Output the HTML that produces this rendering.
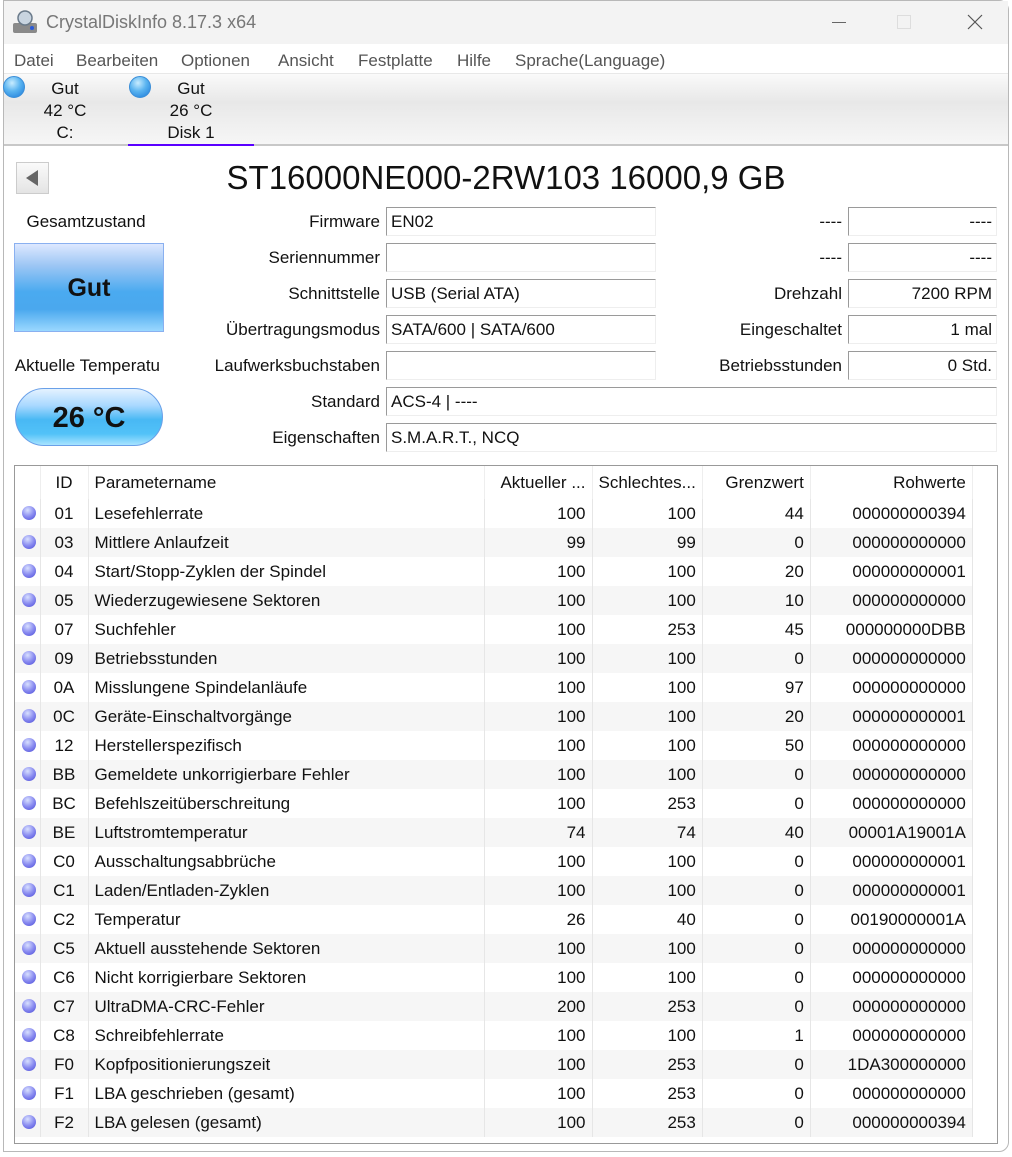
<!DOCTYPE html>
<html><head><meta charset="utf-8"><style>
*{margin:0;padding:0;box-sizing:border-box}
body{width:1012px;height:1157px;background:#fff;font-family:"Liberation Sans",sans-serif;font-size:17px;color:#111;position:relative;overflow:hidden}
.a{position:absolute;white-space:nowrap}
.win{position:absolute;left:3px;top:0;width:1006px;height:1152px;border:1px solid #b8b8b8;border-radius:0 10px 10px 0;background:#fff}
.title{left:4px;top:1px;width:1004px;height:43px;background:#f3f3f3}
.m{position:absolute;top:51px;color:#555}
.box{position:absolute;height:29px;border-top:1px solid #9a9a9a;border-left:1px solid #9a9a9a;border-bottom:1px solid #eee;border-right:1px solid #eee;padding:0 4px;line-height:27px}
.lbl{position:absolute;text-align:right;line-height:29px}
.ball{position:absolute;width:22px;height:22px;border-radius:50%;background:radial-gradient(circle at 40% 30%,#c8ecff 0,#5ab4f0 45%,#1a78d8 100%);border:1px solid #3a8ed8}
.dot{position:absolute;left:7px;width:14px;height:14px;border-radius:50%;background:radial-gradient(circle at 40% 30%,#d8e0ff 0,#8a8cf0 50%,#4a4ad8 100%);top:7px}
table{border-collapse:collapse;position:absolute;left:15px;top:466px;font-size:17px}
td{height:29px;padding:0 6px;border-right:1px solid #e6e6e6;white-space:nowrap}
tr.h td{height:33px;border-right:1px solid #eee}
tr:nth-child(odd):not(.h) td{background:#f6f6f6}
td.r{text-align:right}
</style></head><body>
<div class="win"></div>
<div class="a title"></div>
<svg class="a" style="left:12px;top:9px" width="26" height="26" viewBox="0 0 26 26"><rect x="1" y="14" width="24" height="10" rx="2" fill="#8a8a8a"/><circle cx="13" cy="9" r="7" fill="#c8d4e0" stroke="#6a7a8a" stroke-width="1.5"/><circle cx="20" cy="19" r="2" fill="#2a5ad8"/></svg>
<div class="a" style="left:46px;top:12px;font-size:18px;color:#777">CrystalDiskInfo 8.17.3 x64</div>
<div class="a" style="left:832px;top:22px;width:14px;height:1px;background:#666"></div>
<div class="a" style="left:897px;top:15px;width:14px;height:14px;border:1px solid #ddd"></div>
<svg class="a" style="left:967px;top:14px" width="16" height="16"><path d="M1 1L15 15M15 1L1 15" stroke="#555" stroke-width="1.2"/></svg>
<span class="m" style="left:14px">Datei</span><span class="m" style="left:76px">Bearbeiten</span><span class="m" style="left:181px">Optionen</span><span class="m" style="left:278px">Ansicht</span><span class="m" style="left:358px">Festplatte</span><span class="m" style="left:457px">Hilfe</span><span class="m" style="left:515px">Sprache(Language)</span>
<div class="a" style="left:4px;top:73px;width:1004px;height:73px;background:linear-gradient(#fafafa 0,#e8e8e8 40%,#f6f6f6 100%);border-top:1px solid #e8e8e8;border-bottom:2px solid #c8c8c8"></div>
<div class="ball" style="left:3px;top:76px"></div>
<div class="a" style="left:30px;top:78px;width:70px;text-align:center;line-height:22px">Gut<br>42 °C<br>C:</div>
<div class="ball" style="left:129px;top:76px"></div>
<div class="a" style="left:150px;top:78px;width:82px;text-align:center;line-height:22px">Gut<br>26 °C<br>Disk 1</div>
<div class="a" style="left:128px;top:144px;width:126px;height:2px;background:#5a00ff"></div>

<div class="a" style="left:16px;top:162px;width:33px;height:32px;border:1px solid #ccc;background:linear-gradient(#fafafa,#e4e4e4)"></div>
<svg class="a" style="left:22px;top:168px" width="20" height="20"><path d="M16 2L4 10L16 18Z" fill="#666"/></svg>
<div class="a" style="left:0;top:159px;width:1012px;text-align:center;font-size:33px;padding-left:0">ST16000NE000-2RW103 16000,9 GB</div>

<div class="a" style="left:14px;top:212px;width:144px;text-align:center">Gesamtzustand</div>
<div class="a" style="left:14px;top:243px;width:150px;height:89px;border:1px solid #8ab0f0;background:linear-gradient(#dde8ff 0,#9cc6f4 25%,#4aaaf0 55%,#4aa8ee 75%,#9ad8ff 100%);text-align:center;line-height:89px;font-weight:bold;font-size:25px">Gut</div>
<div class="a" style="left:0;top:356px;width:160px;text-align:right;overflow:hidden;direction:rtl"><span style="direction:ltr">Aktuelle Temperatu</span></div>
<div class="a" style="left:15px;top:388px;width:148px;height:58px;border:1px solid #6aa0e8;border-radius:29px;background:linear-gradient(#e4f2ff 0,#a8d8ff 30%,#48b8f4 55%,#52c2f8 80%,#a8e4ff 100%);text-align:center;line-height:58px;font-weight:bold;font-size:29px">26 °C</div>

<div class="lbl" style="left:180px;width:200px;top:207px">Firmware</div>
<div class="lbl" style="left:180px;width:200px;top:243px">Seriennummer</div>
<div class="lbl" style="left:180px;width:200px;top:279px">Schnittstelle</div>
<div class="lbl" style="left:180px;width:200px;top:315px">Übertragungsmodus</div>
<div class="lbl" style="left:180px;width:200px;top:351px">Laufwerksbuchstaben</div>
<div class="lbl" style="left:180px;width:200px;top:387px">Standard</div>
<div class="lbl" style="left:180px;width:200px;top:423px">Eigenschaften</div>
<div class="box" style="left:386px;width:270px;top:207px">EN02</div>
<div class="box" style="left:386px;width:270px;top:243px"></div>
<div class="box" style="left:386px;width:270px;top:279px">USB (Serial ATA)</div>
<div class="box" style="left:386px;width:270px;top:315px">SATA/600 | SATA/600</div>
<div class="box" style="left:386px;width:270px;top:351px"></div>
<div class="box" style="left:386px;width:611px;top:387px">ACS-4 | ----</div>
<div class="box" style="left:386px;width:611px;top:423px">S.M.A.R.T., NCQ</div>
<div class="lbl" style="left:660px;width:182px;top:207px">----</div>
<div class="lbl" style="left:660px;width:182px;top:243px">----</div>
<div class="lbl" style="left:660px;width:182px;top:279px">Drehzahl</div>
<div class="lbl" style="left:660px;width:182px;top:315px">Eingeschaltet</div>
<div class="lbl" style="left:660px;width:182px;top:351px">Betriebsstunden</div>
<div class="box" style="left:848px;width:149px;top:207px;text-align:right">----</div>
<div class="box" style="left:848px;width:149px;top:243px;text-align:right">----</div>
<div class="box" style="left:848px;width:149px;top:279px;text-align:right">7200 RPM</div>
<div class="box" style="left:848px;width:149px;top:315px;text-align:right">1 mal</div>
<div class="box" style="left:848px;width:149px;top:351px;text-align:right">0 Std.</div>

<div class="a" style="left:14px;top:465px;width:984px;height:679px;border:1px solid #999"></div>
<table>
<colgroup><col style="width:25px"><col style="width:48px"><col style="width:396px"><col style="width:108px"><col style="width:108px"><col style="width:108px"><col style="width:162px"></colgroup>
<tr class="h"><td></td><td style="text-align:center">ID</td><td>Parametername</td><td class="r">Aktueller ...</td><td class="r">Schlechtes...</td><td class="r">Grenzwert</td><td class="r">Rohwerte</td></tr>
<tr><td style="position:relative"><div class="dot"></div></td><td style="text-align:center">01</td><td>Lesefehlerrate</td><td class="r">100</td><td class="r">100</td><td class="r">44</td><td class="r">000000000394</td></tr>
<tr><td style="position:relative"><div class="dot"></div></td><td style="text-align:center">03</td><td>Mittlere Anlaufzeit</td><td class="r">99</td><td class="r">99</td><td class="r">0</td><td class="r">000000000000</td></tr>
<tr><td style="position:relative"><div class="dot"></div></td><td style="text-align:center">04</td><td>Start/Stopp-Zyklen der Spindel</td><td class="r">100</td><td class="r">100</td><td class="r">20</td><td class="r">000000000001</td></tr>
<tr><td style="position:relative"><div class="dot"></div></td><td style="text-align:center">05</td><td>Wiederzugewiesene Sektoren</td><td class="r">100</td><td class="r">100</td><td class="r">10</td><td class="r">000000000000</td></tr>
<tr><td style="position:relative"><div class="dot"></div></td><td style="text-align:center">07</td><td>Suchfehler</td><td class="r">100</td><td class="r">253</td><td class="r">45</td><td class="r">000000000DBB</td></tr>
<tr><td style="position:relative"><div class="dot"></div></td><td style="text-align:center">09</td><td>Betriebsstunden</td><td class="r">100</td><td class="r">100</td><td class="r">0</td><td class="r">000000000000</td></tr>
<tr><td style="position:relative"><div class="dot"></div></td><td style="text-align:center">0A</td><td>Misslungene Spindelanläufe</td><td class="r">100</td><td class="r">100</td><td class="r">97</td><td class="r">000000000000</td></tr>
<tr><td style="position:relative"><div class="dot"></div></td><td style="text-align:center">0C</td><td>Geräte-Einschaltvorgänge</td><td class="r">100</td><td class="r">100</td><td class="r">20</td><td class="r">000000000001</td></tr>
<tr><td style="position:relative"><div class="dot"></div></td><td style="text-align:center">12</td><td>Herstellerspezifisch</td><td class="r">100</td><td class="r">100</td><td class="r">50</td><td class="r">000000000000</td></tr>
<tr><td style="position:relative"><div class="dot"></div></td><td style="text-align:center">BB</td><td>Gemeldete unkorrigierbare Fehler</td><td class="r">100</td><td class="r">100</td><td class="r">0</td><td class="r">000000000000</td></tr>
<tr><td style="position:relative"><div class="dot"></div></td><td style="text-align:center">BC</td><td>Befehlszeitüberschreitung</td><td class="r">100</td><td class="r">253</td><td class="r">0</td><td class="r">000000000000</td></tr>
<tr><td style="position:relative"><div class="dot"></div></td><td style="text-align:center">BE</td><td>Luftstromtemperatur</td><td class="r">74</td><td class="r">74</td><td class="r">40</td><td class="r">00001A19001A</td></tr>
<tr><td style="position:relative"><div class="dot"></div></td><td style="text-align:center">C0</td><td>Ausschaltungsabbrüche</td><td class="r">100</td><td class="r">100</td><td class="r">0</td><td class="r">000000000001</td></tr>
<tr><td style="position:relative"><div class="dot"></div></td><td style="text-align:center">C1</td><td>Laden/Entladen-Zyklen</td><td class="r">100</td><td class="r">100</td><td class="r">0</td><td class="r">000000000001</td></tr>
<tr><td style="position:relative"><div class="dot"></div></td><td style="text-align:center">C2</td><td>Temperatur</td><td class="r">26</td><td class="r">40</td><td class="r">0</td><td class="r">00190000001A</td></tr>
<tr><td style="position:relative"><div class="dot"></div></td><td style="text-align:center">C5</td><td>Aktuell ausstehende Sektoren</td><td class="r">100</td><td class="r">100</td><td class="r">0</td><td class="r">000000000000</td></tr>
<tr><td style="position:relative"><div class="dot"></div></td><td style="text-align:center">C6</td><td>Nicht korrigierbare Sektoren</td><td class="r">100</td><td class="r">100</td><td class="r">0</td><td class="r">000000000000</td></tr>
<tr><td style="position:relative"><div class="dot"></div></td><td style="text-align:center">C7</td><td>UltraDMA-CRC-Fehler</td><td class="r">200</td><td class="r">253</td><td class="r">0</td><td class="r">000000000000</td></tr>
<tr><td style="position:relative"><div class="dot"></div></td><td style="text-align:center">C8</td><td>Schreibfehlerrate</td><td class="r">100</td><td class="r">100</td><td class="r">1</td><td class="r">000000000000</td></tr>
<tr><td style="position:relative"><div class="dot"></div></td><td style="text-align:center">F0</td><td>Kopfpositionierungszeit</td><td class="r">100</td><td class="r">253</td><td class="r">0</td><td class="r">1DA300000000</td></tr>
<tr><td style="position:relative"><div class="dot"></div></td><td style="text-align:center">F1</td><td>LBA geschrieben (gesamt)</td><td class="r">100</td><td class="r">253</td><td class="r">0</td><td class="r">000000000000</td></tr>
<tr><td style="position:relative"><div class="dot"></div></td><td style="text-align:center">F2</td><td>LBA gelesen (gesamt)</td><td class="r">100</td><td class="r">253</td><td class="r">0</td><td class="r">000000000394</td></tr>
</table>
</body></html>
